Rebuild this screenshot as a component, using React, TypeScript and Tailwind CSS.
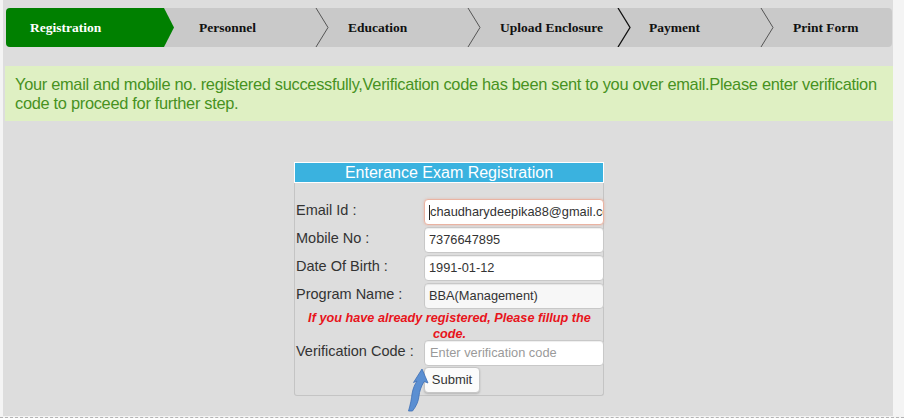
import React from 'react';

const steps = [
  { label: 'Personnel', width: 'w-[155px]', pad: 'pl-[25px]', dark: false },
  { label: 'Education', width: 'w-[152px]', pad: 'pl-[19px]', dark: false },
  { label: 'Upload Enclosure', width: 'w-[150px]', pad: 'pl-[19px]', dark: true },
  { label: 'Payment', width: 'w-[143px]', pad: 'pl-[18px]', dark: false },
];

function Chevron({ dark }: { dark: boolean }) {
  return (
    <svg width="14" height="39" viewBox="0 0 14 39" className="ml-auto shrink-0">
      <polyline
        points="1,0 13,19.5 1,39"
        fill="none"
        stroke={dark ? '#111' : '#555'}
        strokeWidth={dark ? 1.3 : 1}
      />
    </svg>
  );
}

const rows = [
  { label: 'Email Id :', value: 'chaudharydeepika88@gmail.com', focus: true },
  { label: 'Mobile No :', value: '7376647895' },
  { label: 'Date Of Birth :', value: '1991-01-12' },
  { label: 'Program Name :', value: 'BBA(Management)', muted: true },
];

function Field({ value, focus, muted, placeholder }: { value?: string; focus?: boolean; muted?: boolean; placeholder?: string }) {
  return (
    <div
      className={`h-[26px] w-[180px] rounded-[4px] border flex items-center pl-[4px] overflow-hidden whitespace-nowrap text-[12.8px] ${
        focus ? 'border-[#eab3a2] shadow-[0_0_3px_rgba(233,140,110,0.4)]' : 'border-[#c8c8c8] shadow-[inset_0_1px_1px_rgba(0,0,0,0.07)]'
      } ${muted ? 'bg-[#f7f7f7]' : 'bg-white'}`}
    >
      {focus && <span className="w-px h-[15px] bg-[#222] shrink-0" />}
      {placeholder ? (
        <span className="text-[#9a9a9a] pl-px">{placeholder}</span>
      ) : (
        <span className="text-[#333]">{value}</span>
      )}
    </div>
  );
}

export default function App() {
  return (
    <div className="w-[904px] h-[418px] bg-[#f4f4f4] overflow-hidden font-['Liberation_Sans',Arial,sans-serif]">
      <div className="ml-[3px] w-[890px] bg-[#dddddd] pt-[8px] pb-[20px]">
        {/* step bar */}
        <div className="ml-[3px] w-[886px] h-[39px] flex bg-[#c9c9c9] rounded-[4px] font-['Liberation_Serif',serif] font-bold text-[13.5px] text-[#111]">
          <div className="w-[168px] h-full bg-[#008000] rounded-l-[4px] flex items-center pl-[24px] pt-[2px] text-white [clip-path:polygon(0_0,158px_0,168px_50%,158px_100%,0_100%)]">
            Registration
          </div>
          {steps.map((s) => (
            <div key={s.label} className={`${s.width} h-full flex items-center ${s.pad}`}>
              <span className="pt-[2px]">{s.label}</span>
              <Chevron dark={s.dark} />
            </div>
          ))}
          <div className="flex-1 h-full flex items-center pl-[19px] pt-[2px]">Print Form</div>
        </div>

        {/* success message */}
        <div className="mt-[19px] ml-[2px] w-[888px] bg-[#dff0c3] text-[#47921f] text-[16.4px] tracking-[-0.3px] leading-[19px] pl-[10px] pr-[8px] pt-[9px] pb-[8px]">
          Your email and mobile no. registered successfully,Verification code has been sent to you over email.Please enter verification code to proceed for further step.
        </div>

        {/* form panel */}
        <div className="relative mt-[41px] ml-[291px] w-[310px]">
          <div className="border border-white bg-[#3ab2df] text-white text-[16px] leading-[19px] text-center">
            Enterance Exam Registration
          </div>
          <div className="border-x border-b border-[#c4c4c4] rounded-b-[3px] pt-[16px] pb-[2px] pl-px">
            {rows.map((r) => (
              <div key={r.label} className="grid grid-cols-[128px_180px] mb-[2px]">
                <div className="text-[14.5px] leading-[20px] text-[#333] pt-px">{r.label}</div>
                <Field value={r.value} focus={r.focus} muted={r.muted} />
              </div>
            ))}
            <p className="px-[4px] text-center text-[12.7px] leading-[15.5px] font-bold italic text-[#e8141b]">
              If you have already registered, Please fillup the code.
            </p>
            <div className="grid grid-cols-[128px_180px] -mt-[2px]">
              <div className="text-[14.5px] leading-[20px] text-[#333] pt-[1px]">Verification Code :</div>
              <Field placeholder="Enter verification code" />
            </div>
            <div className="grid grid-cols-[128px_180px] mt-px">
              <div />
              <button className="w-[56px] h-[26px] rounded-[4px] border border-[#c6c6c6] bg-[#fbfbfb] text-[13px] text-[#333] shadow-[0_1px_2px_rgba(0,0,0,0.18)]">
                Submit
              </button>
            </div>
          </div>

          {/* pointer arrow */}
          <svg width="30" height="48" viewBox="0 0 30 48" className="absolute left-[106px] top-[204px]">
            <path
              d="M22 3 L28 17 L24 15.5 C21 21 19.5 25 19 30 C18.5 35 16.5 40 12.5 45 L8.5 45 C10.5 38 11.5 33 12 28 C13 22 15 18 17 15 L13.5 16.5 Z"
              fill="#5b8fd2"
              stroke="#3d6fb5"
              strokeWidth="0.8"
              strokeLinejoin="round"
            />
          </svg>
        </div>
      </div>
      <div className="mt-px border-t border-dashed border-[#b4b4b4]" />
    </div>
  );
}
